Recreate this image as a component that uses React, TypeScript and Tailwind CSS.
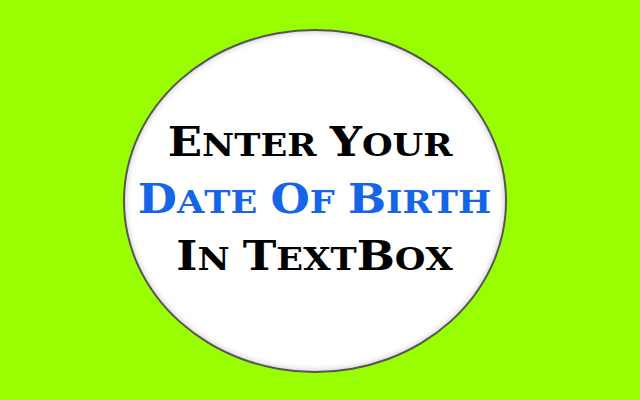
import React from "react";

function Line({ text, className }: { text: string; className: string }) {
  const chars = text.split("");
  return (
    <div className={`flex items-baseline h-[57px] leading-[57px] ${className}`}>
      {chars.map((c, i) =>
        c === " " ? (
          <span key={i} className="w-[12px]" />
        ) : c === c.toUpperCase() ? (
          <span key={i} className="text-[41px] leading-[57px]">{c}</span>
        ) : (
          <span key={i} className="text-[32px] leading-[57px]">{c.toUpperCase()}</span>
        )
      )}
    </div>
  );
}

export default function App() {
  return (
    <div className="w-[640px] h-[400px] bg-[#99ff00] pl-[123px] pt-[29px] overflow-hidden">
      <div className="w-[384px] h-[344px] rounded-[50%] bg-white border-2 border-[#555] shadow-[inset_0_0_6px_rgba(0,0,0,0.25)] flex flex-col items-center justify-center pl-[2px]">
        <div
          className="flex flex-col items-center font-bold scale-x-[1.1] -mt-[4px]"
          style={{ fontFamily: '"DejaVu Serif", serif' }}
        >
          <Line text="Enter Your" className="text-black -ml-[10px]" />
          <Line text="Date Of Birth" className="text-[#1565e8] -ml-[2px]" />
          <Line text="In TextBox" className="text-black -ml-[2px]" />
        </div>
      </div>
    </div>
  );
}
